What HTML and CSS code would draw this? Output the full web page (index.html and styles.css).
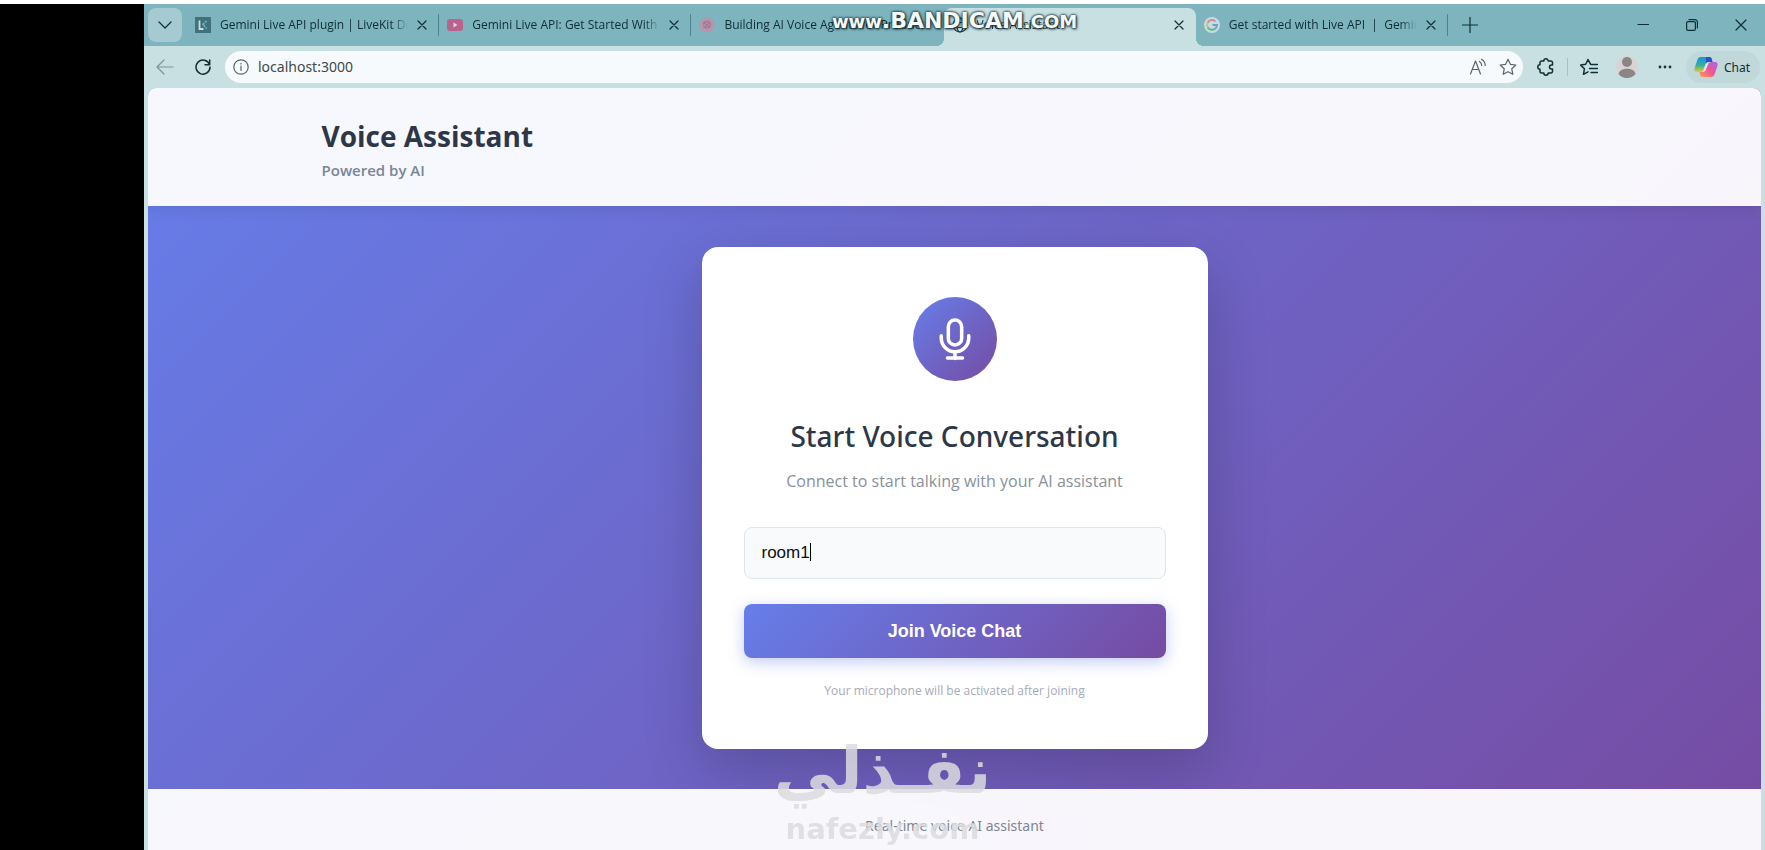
FILE: index.html
```html
<!DOCTYPE html>
<html lang="en">
<head>
<meta charset="utf-8">
<meta name="viewport" content="width=device-width, initial-scale=1">
<title>Voice Assistant</title>
<link rel="stylesheet" href="styles.css">
</head>
<body>
<div class="browser">
  <div class="tabstrip">
    <button class="tab-menu" type="button" aria-label="Tab actions">
      <svg class="icon" width="16" height="16" viewBox="0 0 16 16"><path d="M2 5l6 6 6-6"/></svg>
    </button>
    <div class="tabs">
      <div class="tab tab-divided">
        <svg class="favicon" viewBox="0 0 16 16"><rect width="16" height="16" fill="#42707c"/><path d="M4.500 3.500v8.500h4" fill="none" stroke="#c5dfe3" stroke-width="1.800"/><path d="M11.500 4L8 7.500l3.500 4" fill="none" stroke="#6fc0c8" stroke-width="1.600" stroke-dasharray="2 1"/></svg>
        <a class="tab-title" href="#">Gemini Live API plugin | LiveKit Docs</a>
        <button class="tab-close" type="button" aria-label="Close tab"><svg class="icon" width="10" height="10" viewBox="0 0 10 10"><path d="M1 1l8 8M9 1L1 9"/></svg></button>
      </div>
      <div class="tab tab-divided">
        <svg class="favicon" viewBox="0 0 16 16"><rect y="2" width="16" height="12" rx="3" fill="#b9628e"/><path d="M6.500 5.500v5l4-2.500z" fill="#e4d3e0"/></svg>
        <a class="tab-title" href="#">Gemini Live API: Get Started With Voice</a>
        <button class="tab-close" type="button" aria-label="Close tab"><svg class="icon" width="10" height="10" viewBox="0 0 10 10"><path d="M1 1l8 8M9 1L1 9"/></svg></button>
      </div>
      <div class="tab">
        <svg class="favicon" viewBox="0 0 16 16"><circle cx="8" cy="8" r="7.500" fill="#b596ac"/><path d="M4.500 7.500c0-4 7-4 7 0s-6 4.500-7 1M5 5.500l6 5M6 10l4-4" fill="none" stroke="#a87798" stroke-width="1.300"/></svg>
        <a class="tab-title" href="#">Building AI Voice Agents for Production</a>
      </div>
      <div class="tab tab-active">
        <svg class="favicon" viewBox="0 0 16 16"><g fill="none" stroke="#1d3a40" stroke-width="1.200"><circle cx="8" cy="8" r="7"/><ellipse cx="8" cy="8" rx="3.200" ry="7"/><path d="M1.500 5.500h13M1.500 10.500h13"/></g></svg>
        <a class="tab-title" href="#">Voice Assistant</a>
        <button class="tab-close" type="button" aria-label="Close tab"><svg class="icon" width="10" height="10" viewBox="0 0 10 10"><path d="M1 1l8 8M9 1L1 9"/></svg></button>
      </div>
      <div class="tab tab-divided">
        <svg class="favicon" viewBox="0 0 16 16"><circle cx="8" cy="8" r="8" fill="#c3dde2"/><g fill="none" stroke-width="2"><path d="M11.500 4.500A5 5 0 0 0 3.700 5.500" stroke="#d48b92"/><path d="M3.700 5.500a5 5 0 0 0 0 5" stroke="#c9bd82"/><path d="M3.700 10.500a5 5 0 0 0 7.600 1" stroke="#6fb08e"/><path d="M11.300 11.500A5 5 0 0 0 13 8H8.500" stroke="#6f9fd0"/></g></svg>
        <a class="tab-title" href="#">Get started with Live API &nbsp;|&nbsp; Gemini API</a>
        <button class="tab-close" type="button" aria-label="Close tab"><svg class="icon" width="10" height="10" viewBox="0 0 10 10"><path d="M1 1l8 8M9 1L1 9"/></svg></button>
      </div>
    </div>
    <button class="new-tab" type="button" aria-label="New tab"><svg class="icon" width="16" height="16" viewBox="0 0 16 16"><path d="M8 0v16M0 8h16"/></svg></button>
    <div class="window-controls">
      <button type="button" aria-label="Minimize"><svg class="icon" width="12" height="12" viewBox="0 0 12 12"><path d="M1 5.500h11"/></svg></button>
      <button type="button" aria-label="Restore"><svg class="icon" width="12" height="12" viewBox="0 0 12 12"><rect x=".6" y="2.600" width="8.800" height="8.800" rx="1.500"/><path d="M3 .6h6a2.400 2.400 0 0 1 2.400 2.400v6"/></svg></button>
      <button type="button" aria-label="Close"><svg class="icon" width="12" height="12" viewBox="0 0 12 12"><path d="M1 1l10 10M11 1L1 11"/></svg></button>
    </div>
    <div class="recorder-mark"><span class="mark-small">www</span>.BANDICAM<span class="mark-small">.COM</span></div>
  </div>

  <div class="toolbar">
    <button class="tool tool-muted" type="button" aria-label="Back"><svg class="icon" width="18" height="16" viewBox="0 0 18 16"><path d="M8 1L1 8l7 7M1 8h16"/></svg></button>
    <button class="tool" type="button" aria-label="Reload"><svg class="icon icon-strong" width="16" height="16" viewBox="0 0 16 16"><path d="M14.500 5.500A7 7 0 1 0 15 8M14.700 1v4.700H10"/></svg></button>
    <div class="address">
      <svg class="icon address-info" width="16" height="16" viewBox="0 0 16 16"><circle cx="8" cy="8" r="7.200"/><path d="M8 7v4.500M8 4.300v.6"/></svg>
      <input class="address-input" type="text" value="localhost:3000" aria-label="Address">
      <button class="address-tool" type="button" aria-label="Read aloud"><svg class="icon" width="18" height="18" viewBox="0 0 18 18"><path d="M1.500 16L6.500 3l5 13M3.200 11.500h6.600M10.500 3.500c1.500 1 2.200 2.300 2.200 4M12.500 1.200c2.500 1.500 3.700 3.600 3.700 6.300"/></svg></button>
      <button class="address-tool" type="button" aria-label="Add to favorites"><svg class="icon" width="18" height="18" viewBox="0 0 18 18"><path d="M9 1.300l2.400 5 5.400.7-4 3.800 1 5.500L9 13.700l-4.800 2.600 1-5.500-4-3.800 5.400-.7z"/></svg></button>
    </div>
    <button class="tool" type="button" aria-label="Extensions"><svg class="icon icon-strong" width="18" height="18" viewBox="0 0 18 18"><path d="M4.500 3h2.300a2.200 2.200 0 0 1 4.400 0H14a1.500 1.500 0 0 1 1.500 1.500V7h-1a2 2 0 0 0 0 4h1v2.500A1.500 1.500 0 0 1 14 15h-2.800a2.200 2.200 0 0 1-4.400 0H4.500A1.500 1.500 0 0 1 3 13.500V11.200a2.200 2.200 0 0 1 0-4.400V4.500A1.500 1.500 0 0 1 4.500 3z"/></svg></button>
    <span class="tool-divider"></span>
    <button class="tool" type="button" aria-label="Favorites"><svg class="icon icon-strong" width="18" height="18" viewBox="0 0 18 18"><path d="M10.500 6.200L8 1.500 5.700 6.300l-5 .8 3.700 3.700-.9 5.500L8 13.800M11 6.500h6.500M9.500 10.500h8M11 14.500h6.500"/></svg></button>
    <button class="tool" type="button" aria-label="Profile"><svg width="22" height="22" viewBox="0 0 22 22"><circle cx="11" cy="11" r="11" fill="#d9d3d4"/><circle cx="11" cy="6" r="5" fill="#8b8586"/><path d="M2.500 18c1-7 16-7 17 0a11 11 0 0 1-17 0z" fill="#8b8586"/></svg></button>
    <button class="tool" type="button" aria-label="Settings and more"><svg width="14" height="4" viewBox="0 0 14 4" fill="#17353b"><circle cx="2" cy="2" r="1.400"/><circle cx="7" cy="2" r="1.400"/><circle cx="12" cy="2" r="1.400"/></svg></button>
    <button class="chat" type="button">
      <svg width="24" height="22" viewBox="0 0 24 22">
        <defs>
          <linearGradient id="cool" x1="0" y1="0" x2="0" y2="1"><stop offset="0" stop-color="#198fe8"/><stop offset=".55" stop-color="#37b19a"/><stop offset="1" stop-color="#e8c929"/></linearGradient>
          <linearGradient id="warm" x1="1" y1="0" x2="0" y2="1"><stop offset="0" stop-color="#a964ea"/><stop offset=".5" stop-color="#ef5597"/><stop offset="1" stop-color="#ff9d42"/></linearGradient>
        </defs>
        <path d="M7 1h8c2 0 2.600 1.300 3 3l.5 2h-4c-2 0-2.700 1-3.200 2.600L9.500 13c-.6 2-1.500 3-3.500 3H3c-2.500 0-3-2-2.400-4L3.500 3.500C4 2 5 1 7 1z" fill="url(#cool)"/>
        <path d="M12 1h3c2 0 2.600 1.300 3 3l.5 2h-4c-1.400 0-2.200.5-2.700 1.300z" fill="#2454c7"/>
        <path d="M17 21H9c-2 0-2.600-1.300-3-3l-.5-2h2.500c2 0 3.200-1 3.700-2.600L14 9c.6-2 1.500-3 3.500-3H21c2.500 0 3 2 2.400 4l-2.900 8.500C20 20 19 21 17 21z" fill="url(#warm)"/>
        <path d="M14 7.500l-2.300 6.200c-.4 1-1 1.700-2.200 1.800l2.300-6.300c.4-1 1-1.600 2.200-1.700z" fill="#e6eaf0"/>
      </svg>
      Chat
    </button>
  </div>

  <div class="page">
    <header class="page-header">
      <div class="container">
        <h1 class="brand">Voice Assistant</h1>
        <p class="tagline">Powered by AI</p>
      </div>
    </header>
    <main class="page-main">
      <form class="card">
        <div class="mic-badge">
          <svg width="50" height="50" viewBox="0 0 24 24" fill="none" stroke="#fff" stroke-width="1.700" stroke-linecap="round" stroke-linejoin="round"><rect x="8.800" y="2.900" width="6.400" height="12" rx="3.200"/><path d="M5.400 10.500v1a6.600 6.600 0 0 0 13.200 0v-1M12 18.300v3M8.400 21.100h7.200"/></svg>
        </div>
        <h2 class="card-title">Start Voice Conversation</h2>
        <p class="card-subtitle">Connect to start talking with your AI assistant</p>
        <div class="field">
          <input class="field-input" type="text" value="room1" aria-label="Room name">
          <span class="caret"></span>
        </div>
        <button class="join" type="button">Join Voice Chat</button>
        <p class="hint">Your microphone will be activated after joining</p>
      </form>
    </main>
    <footer class="page-footer">Real-time voice AI assistant</footer>
  </div>
</div>
<div class="watermark">
  <span class="watermark-arabic" lang="ar" dir="rtl">نفـذلي</span>
  <span class="watermark-latin">nafezly.com</span>
</div>
</body>
</html>
```
FILE: styles.css
```css
* {
  box-sizing: border-box;
}

body {
  margin: 0;
  height: 100vh;
  position: relative;
  overflow: hidden;
  background: #000;
  border-top: 4px solid #fff;
  font-family: "Noto Sans", "Open Sans", sans-serif;
}

h1, h2, p {
  margin: 0;
}

button {
  display: flex;
  align-items: center;
  justify-content: center;
  padding: 0;
  border: 0;
  background: none;
  color: inherit;
  font-family: inherit;
}

.browser {
  display: flex;
  flex-direction: column;
  height: 100%;
  margin-left: 144px;
  background: #c8e0e2;
  color: #0f2e35;
}

.icon {
  fill: none;
  stroke: currentColor;
  stroke-width: 1.2;
  stroke-linecap: round;
  stroke-linejoin: round;
}

.icon-strong {
  stroke-width: 1.5;
}

/* Tab strip */
.tabstrip {
  position: relative;
  display: flex;
  align-items: stretch;
  flex: none;
  height: 42px;
  padding-left: 4px;
  background: #7db4be;
}

.tab-menu {
  width: 34px;
  margin: 4px 5px 4px 0;
  border-radius: 8px;
  background: #a5cad2;
}

.tabs {
  display: flex;
  flex: 0 1 1261px;
  min-width: 0;
}

.tab {
  position: relative;
  display: flex;
  align-items: center;
  flex: 1 1 0;
  min-width: 0;
  gap: 9px;
  padding: 0 12px 0 8px;
}

.tab-divided {
  background: linear-gradient(#4f828d, #4f828d) right 10px / 1px 22px no-repeat;
}

.tab-active {
  margin-top: 4px;
  padding-bottom: 4px;
  border-radius: 8px 8px 0 0;
  background: #c8e0e2;
}

.tab-active::before,
.tab-active::after {
  content: "";
  position: absolute;
  bottom: 0;
  width: 8px;
  height: 8px;
}

.tab-active::before {
  right: 100%;
  background: radial-gradient(circle at 0 0, transparent 8px, #c8e0e2 8px);
}

.tab-active::after {
  left: 100%;
  background: radial-gradient(circle at 100% 0, transparent 8px, #c8e0e2 8px);
}

.favicon {
  flex: none;
  width: 16px;
  height: 16px;
}

.tab-title {
  flex: 1;
  overflow: hidden;
  color: inherit;
  font-family: "Open Sans", sans-serif;
  font-size: 12px;
  line-height: 22px;
  text-decoration: none;
  white-space: nowrap;
  mask-image: linear-gradient(to left, transparent, #000 16px);
}

.tab-close {
  flex: none;
  width: 10px;
  height: 20px;
}

.new-tab {
  width: 44px;
}

.window-controls {
  display: flex;
  margin-left: auto;
}

.window-controls button {
  width: 49px;
}

.recorder-mark {
  position: absolute;
  top: 5px;
  left: 50%;
  transform: translateX(-50%);
  color: #f4f8f8;
  font: bold 22px/24px "DejaVu Sans", sans-serif;
  white-space: nowrap;
  text-shadow: 0 0 2px #1b3338, 0 0 3px #1b3338, 1px 1px 3px #1b3338;
}

.mark-small {
  font-size: 18px;
}

/* Toolbar */
.toolbar {
  display: flex;
  align-items: center;
  flex: none;
  height: 42px;
  padding: 0 5px 0 2px;
}

.tool {
  flex: none;
  width: 38px;
  height: 32px;
}

.tool-muted {
  color: #7b9499;
}

.tool-divider {
  width: 1px;
  height: 18px;
  margin: 0 2px;
  background: #a6c0c4;
}

.address {
  display: flex;
  align-items: center;
  flex: 1;
  min-width: 0;
  height: 32px;
  margin: 0 4px 0 3px;
  padding: 0 0 0 8px;
  border-radius: 16px;
  background: #f6fafc;
  color: #5a6467;
}

.address-info {
  flex: none;
}

.address-input {
  flex: 1;
  min-width: 0;
  margin-left: 8px;
  padding: 0 1px;
  border: 0;
  outline: 0;
  background: none;
  color: #41494c;
  font: 14px/20px "Noto Sans", sans-serif;
}

.address-tool {
  width: 30px;
  height: 28px;
}

.chat {
  gap: 6px;
  height: 32px;
  margin-left: 2px;
  padding: 0 10px 0 8px;
  border-radius: 16px;
  background: #c0d8da;
  font-size: 12px;
}

/* Page */
.page {
  display: flex;
  flex-direction: column;
  flex: 1;
  min-height: 0;
  margin: 0 4px;
  overflow: hidden;
  border-radius: 8px 8px 0 0;
  background: linear-gradient(135deg, #667eea 0%, #764ba2 100%);
}

.page-header {
  flex: none;
  padding: 27px 24px 23px;
  background: rgba(255, 255, 255, 0.95);
  box-shadow: 0 2px 16px rgba(0, 0, 0, 0.1);
}

.container {
  max-width: 1266px;
  margin: 0 auto;
}

.brand {
  color: #2d3748;
  font-family: "Open Sans", sans-serif;
  font-size: 28px;
  font-weight: 700;
  line-height: 42px;
}

.tagline {
  color: #7a8596;
  font-family: "Open Sans", sans-serif;
  font-size: 15px;
  font-weight: 600;
  line-height: 26px;
}

.page-main {
  display: flex;
  flex: none;
  justify-content: center;
  padding: 41px 24px 40px;
}

.card {
  display: flex;
  flex-direction: column;
  align-items: center;
  width: 100%;
  max-width: 506px;
  padding: 50px 42px 48px;
  border-radius: 16px;
  background: #fff;
  box-shadow: 0 20px 60px rgba(0, 0, 0, 0.2);
  text-align: center;
}

.mic-badge {
  display: flex;
  align-items: center;
  justify-content: center;
  width: 84px;
  height: 84px;
  border-radius: 50%;
  background: linear-gradient(135deg, #667eea 0%, #764ba2 100%);
}

.card-title {
  margin-top: 34px;
  color: #2d3748;
  font-size: 28px;
  font-weight: 500;
  line-height: 42px;
}

.card-subtitle {
  margin-top: 12px;
  color: #88919c;
  font-family: "Open Sans", sans-serif;
  font-size: 16px;
  line-height: 24px;
}

.field {
  position: relative;
  width: 100%;
  margin-top: 34px;
}

.field-input {
  width: 100%;
  height: 52px;
  padding: 0 17px;
  border: 1px solid #dfe6ea;
  border-radius: 8px;
  outline: 0;
  background: #f8fafc;
  color: #0c0f12;
  font: 17px/24px "Liberation Sans", sans-serif;
}

.caret {
  position: absolute;
  top: 16px;
  left: 66px;
  width: 1px;
  height: 18px;
  background: #000;
}

.join {
  width: 100%;
  height: 54px;
  margin-top: 25px;
  border-radius: 8px;
  background: linear-gradient(135deg, #667eea 0%, #764ba2 100%);
  box-shadow: 0 4px 15px rgba(102, 126, 234, 0.4);
  color: #fff;
  font: bold 18px/24px "Liberation Sans", sans-serif;
}

.hint {
  margin-top: 23px;
  color: #a3acb8;
  font-family: "Open Sans", sans-serif;
  font-size: 12px;
  line-height: 20px;
}

.page-footer {
  flex: none;
  padding: 25px 24px;
  background: rgba(255, 255, 255, 0.95);
  color: #7d8591;
  font-size: 14px;
  line-height: 24px;
  text-align: center;
}

/* Translucent site mark laid over the window */
.watermark {
  position: absolute;
  bottom: 3px;
  left: 50%;
  display: flex;
  flex-direction: column;
  align-items: center;
  transform: translateX(-50%);
  color: #dcdce0;
  font-family: "DejaVu Sans", sans-serif;
  font-weight: bold;
  opacity: 0.85;
  pointer-events: none;
}

.watermark-arabic {
  font-size: 64px;
  line-height: 80px;
}

.watermark-latin {
  font-size: 29px;
  line-height: 36px;
}
```
